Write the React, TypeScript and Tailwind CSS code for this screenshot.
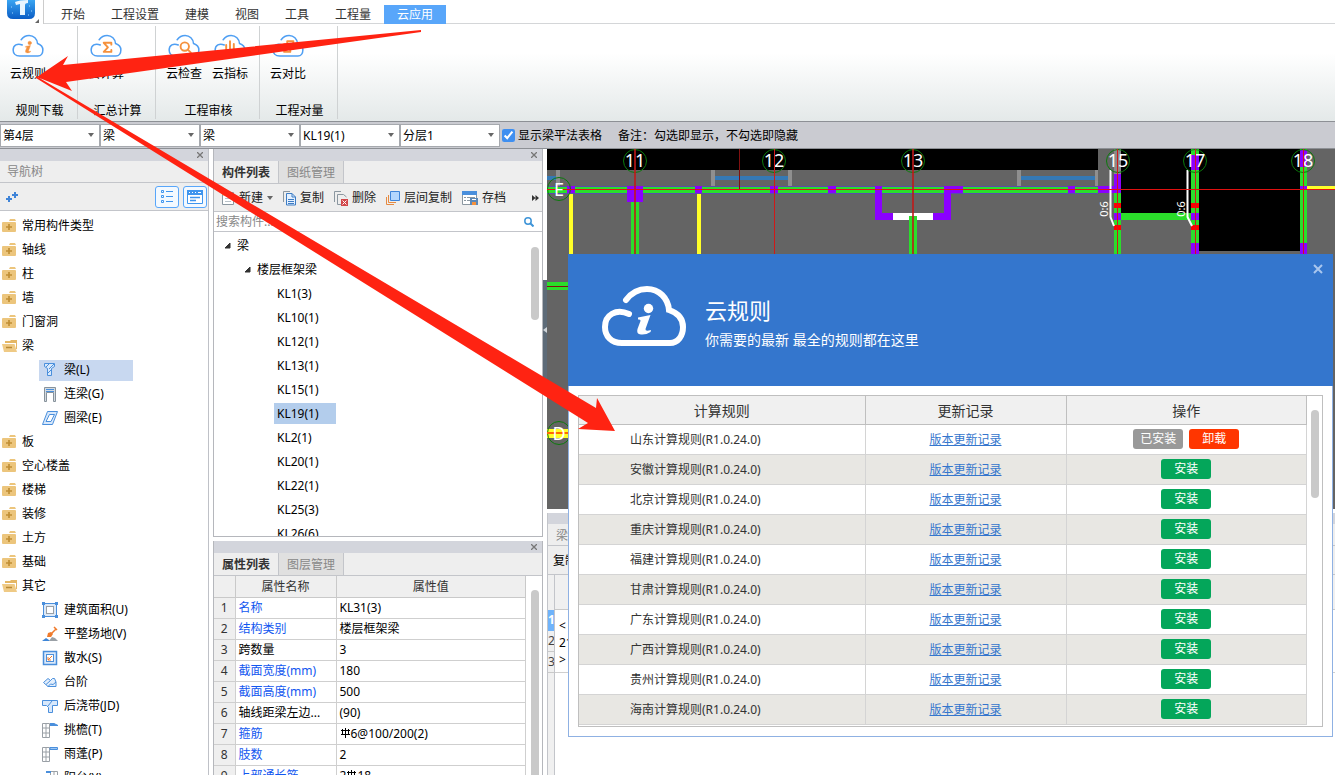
import React from 'react';

const ribbonTabs = ['开始', '工程设置', '建模', '视图', '工具', '工程量', '云应用'];

const ribbonGroups = [
  { title: '规则下载', wide: false, items: [{ label: '云规则', icon: 'info' }] },
  { title: '汇总计算', wide: false, items: [{ label: '云计算', icon: 'sum' }] },
  {
    title: '工程审核',
    wide: true,
    items: [
      { label: '云检查', icon: 'search' },
      { label: '云指标', icon: 'chart' },
    ],
  },
  { title: '工程对量', wide: false, items: [{ label: '云对比', icon: 'compare' }] },
];

const filters = [
  { name: '楼层', value: '第4层' },
  { name: '构件大类', value: '梁' },
  { name: '构件类型', value: '梁' },
  { name: '构件', value: 'KL19(1)' },
  { name: '分层', value: '分层1' },
];

const navTree = [
  { label: '常用构件类型' },
  { label: '轴线' },
  { label: '柱' },
  { label: '墙' },
  { label: '门窗洞' },
  {
    label: '梁',
    children: [
      { label: '梁(L)', icon: 'beam', selected: true },
      { label: '连梁(G)', icon: 'link' },
      { label: '圈梁(E)', icon: 'ring' },
    ],
  },
  { label: '板' },
  { label: '空心楼盖' },
  { label: '楼梯' },
  { label: '装修' },
  { label: '土方' },
  { label: '基础' },
  {
    label: '其它',
    children: [
      { label: '建筑面积(U)', icon: 'area' },
      { label: '平整场地(V)', icon: 'site' },
      { label: '散水(S)', icon: 'apron' },
      { label: '台阶', icon: 'step' },
      { label: '后浇带(JD)', icon: 'strip' },
      { label: '挑檐(T)', icon: 'eave' },
      { label: '雨蓬(P)', icon: 'canopy' },
      { label: '阳台(Y)', icon: 'balcony' },
    ],
  },
] as { label: string; children?: { label: string; icon: string; selected?: boolean }[] }[];

const members = ['KL1(3)', 'KL10(1)', 'KL12(1)', 'KL13(1)', 'KL15(1)', 'KL19(1)', 'KL2(1)', 'KL20(1)', 'KL22(1)', 'KL25(3)', 'KL26(6)'];

const properties = [
  { name: '名称', value: 'KL31(3)', blue: true },
  { name: '结构类别', value: '楼层框架梁', blue: true },
  { name: '跨数量', value: '3' },
  { name: '截面宽度(mm)', value: '180', blue: true },
  { name: '截面高度(mm)', value: '500', blue: true },
  { name: '轴线距梁左边...', value: '(90)' },
  { name: '箍筋', before: '', rebar: true, value: '6@100/200(2)', blue: true },
  { name: '肢数', value: '2', blue: true },
  { name: '上部通长筋', before: '2', rebar: true, value: '18', blue: true },
];

const rules = ['山东', '安徽', '北京', '重庆', '福建', '甘肃', '广东', '广西', '贵州', '海南'];

const CLOUD = 'M24 14C30 6 37 3 45 3C57 3 66 12 67 24C76 27 81 33 81 41C81 50 76 57 68 57L20 57C9 57 3 50 3 41C3 29 14 22 27 28';

const InfoMark = () => (
  <>
    <circle cx="46.500" cy="22.500" r="4.700" />
    <path d="M36 31.500L48.500 29L43.500 43Q43 46 49 44L48.500 46Q44 49 39 48.500Q34 48 35.500 43L38.500 35Q39 33 36 33.500Z" />
  </>
);

const CloudIcon = ({ icon }: { icon: string }) => (
  <svg viewBox="0 0 84 61" className="h-6 w-8" fill="none" stroke="#4f9ff3" strokeWidth="4" strokeLinecap="round" strokeLinejoin="round">
    <path d={CLOUD} />
    {icon === 'info' && (
      <g fill="#f5913d" stroke="#f5913d" strokeWidth="1">
        <InfoMark />
      </g>
    )}
    {icon === 'sum' && <path d="M56 27V22H36L47 34L36 46H56V41" stroke="#f5913d" strokeWidth="5" />}
    {icon === 'search' && (
      <g stroke="#f5913d" strokeWidth="5">
        <circle cx="44" cy="32" r="11" />
        <path d="M52 40L60 48" />
      </g>
    )}
    {icon === 'chart' && <path d="M32 28V44M42 18V44M52 25V44M28 44H58" stroke="#f5913d" strokeWidth="5" />}
    {icon === 'compare' && <path d="M40 24V18H56V38H50M32 26H48V46H32Z" stroke="#f5913d" strokeWidth="5" />}
  </svg>
);

const FolderIcon = ({ open }: { open?: boolean }) => (
  <svg viewBox="0 0 16 14" className="h-3.5 w-4 shrink-0">
    {open ? (
      <>
        <path d="M3 4V2H8L9 1H15V10H14V4Z" fill="#e5b765" />
        <path d="M0 5H12.500L15 13H2Z" fill="#efca85" />
        <path d="M4 8.500H10" stroke="#b98a35" strokeWidth="1.500" />
      </>
    ) : (
      <>
        <path d="M7 2L8 0H13L14 2Z" fill="#ecc57c" />
        <rect x="0" y="3" width="14" height="10" rx="1" fill="#ecc57c" />
        <path d="M4 8H10M7 5V11" stroke="#c08f35" strokeWidth="1.700" />
      </>
    )}
  </svg>
);

const MemberIcon = ({ icon }: { icon: string }) => (
  <svg viewBox="0 0 16 16" className="size-4 shrink-0" fill="none" stroke="#4a8fdc" strokeWidth="1">
    {icon === 'beam' && <path d="M2.500 1.500H12.500V4.500L9.500 6.500V13.500H5.500V6.500L2.500 4.500ZM4 5L7 2M7 7L12 2M6 11L9 8" fill="#d8e8fb" />}
    {icon === 'link' && (
      <>
        <path d="M2.500 15.500V1.500H13.500V15.500H11.500V6.500H4.500V15.500Z" fill="#d5dbe0" stroke="#87929b" />
        <path d="M4 3.500H12M4 5.500H12" />
      </>
    )}
    {icon === 'ring' && <path d="M5.500 1.500H15.500L10.500 14.500H.5ZM7.500 4.500H12.500L9 11.500H4Z" fill="#d8e8fb" fillRule="evenodd" />}
    {icon === 'area' && (
      <>
        <rect x="1.500" y="1.500" width="13" height="13" fill="#dce9f8" />
        <rect x="4.500" y="4.500" width="7" height="7" fill="#fff" stroke="#9aa0a6" />
        <path d="M0 1.500H3M13 1.500H16M0 14.500H3M13 14.500H16" strokeWidth="3" />
      </>
    )}
    {icon === 'site' && (
      <>
        <path d="M0 15L4 12L7 14L8 15Z" fill="#3d86d8" stroke="none" />
        <path d="M7 15L10 11L13 12L16 15Z" fill="#9aa0a6" stroke="none" />
        <path d="M5 11L6 7L9 6L11 8L9 11Z" fill="#f07b2c" stroke="none" />
        <path d="M9 8L14 3M12 1L15 4" stroke="#f07b2c" strokeWidth="1.500" />
      </>
    )}
    {icon === 'apron' && (
      <>
        <rect x="1.500" y="1.500" width="13" height="13" fill="#dce9f8" strokeWidth="1.500" />
        <rect x="4.500" y="4.500" width="7" height="7" fill="#fff" />
        <path d="M10 6L6 10M6 7V10H9" stroke="#f07b2c" />
      </>
    )}
    {icon === 'step' && <path d="M1.500 8.500L6 4.500L8.500 6.500L10.500 4.500H12.500L14 8V12.500H6ZM4 10.500L8.500 6.500M6 12.500L8.500 10L11 10.500L14 8" fill="#e4effc" />}
    {icon === 'strip' && <path d="M.5 2.500H15.500V7.500H10.500V14.500H6.500V9.500L4.500 7.500H.5ZM10 3L6 8" fill="#d8e8fb" />}
    {(icon === 'eave' || icon === 'canopy' || icon === 'balcony') && (
      <path d="M.5 1.500H7.500V15.500H.5ZM4 1.500V6M.5 6H7.500M4 6V15M.5 11H7.500" stroke="#9aa0a6" transform={icon === 'balcony' ? 'translate(8 0)' : undefined} />
    )}
    {icon === 'eave' && <path d="M8 1.500H12L16 3.500H8" fill="#4a8fdc" />}
    {icon === 'canopy' && <path d="M8 1.500H15.500V3.500H8Z" fill="#9cc6f5" />}
    {icon === 'balcony' && <path d="M4 2H9" strokeWidth="2" />}
  </svg>
);

const Caret = () => (
  <svg viewBox="0 0 6 4" className="pointer-events-none h-1 w-1.5 shrink-0" fill="#666">
    <path d="M0 0H6L3 4Z" />
  </svg>
);

const Rebar = () => (
  <svg viewBox="0 0 11 10" className="mb-1 inline h-2.5 w-[11px]" fill="none" stroke="#000" strokeWidth="1" shapeRendering="crispEdges">
    <path d="M5.500 0V10M2.500 1V7M8.500 1V7M1 2.500H10M1 6.500H10" />
  </svg>
);

const PanelBar = ({ name }: { name: string }) => (
  <div className="flex h-3 shrink-0 items-center justify-end bg-[#d3d5dc] pr-[3px]">
    <button aria-label={name} className="flex size-2.5 items-center justify-center">
      <svg viewBox="0 0 6 6" className="size-1.5" stroke="#777" strokeWidth="1.300">
        <path d="M0 0L6 6M6 0L0 6" />
      </svg>
    </button>
  </div>
);

const PanelTabs = ({ tabs }: { tabs: string[] }) => (
  <div className="flex h-[23px] shrink-0 border-b border-[#c3c5ca] bg-[#eee]">
    <button className="border-r border-[#c3c5ca] px-2 pt-0.5 font-bold text-[#333]">{tabs[0]}</button>
    <button className="border-r border-[#c3c5ca] bg-[#e0e0e0] px-2 pt-0.5 text-[#888]">{tabs[1]}</button>
  </div>
);

const Ribbon = () => (
  <header className="shrink-0">
    <div className="flex h-6 items-start">
      <div className="relative h-6 w-11 shrink-0 border-r border-[#ccc]">
        <svg viewBox="0 0 36 24" className="ml-1 h-6 w-9">
          <defs>
            <linearGradient id="logo" x1="0" y1="0" x2="0" y2="1">
              <stop offset="0" stopColor="#3aa5f2" />
              <stop offset="1" stopColor="#0a5cc4" />
            </linearGradient>
          </defs>
          <path d="M3 0H31V13Q31 19 25 19H9Q3 19 3 13Z" fill="url(#logo)" />
          <path d="M11 2Q15 0 24 0V3Q21 3 21 5V15H16V4L12 5Z" fill="#e9f6ff" />
          <path d="M7 7H8M25 6H26M27 11H28M8 13H9M24 15H25" stroke="#9fd6ff" />
          <path d="M35 19V23H31Z" fill="#666" />
        </svg>
      </div>
      <nav className="flex h-6 flex-1 items-end border-b border-[#d4d6d8] pl-1 text-[#333]">
        {ribbonTabs.map((tab) => (
          <button key={tab} className={tab === '云应用' ? '-mb-px h-[19px] bg-[#58a6fa] px-[13px] text-white' : '-mb-px h-[19px] px-[13px]'}>
            {tab}
          </button>
        ))}
      </nav>
    </div>
    <div className="flex h-[97px] bg-linear-to-b from-white from-30% to-[#e4e9e9] py-0.5">
      {ribbonGroups.map((group) => (
        <section key={group.title} className={`flex flex-col justify-between border-r border-[#cfd2d3] pt-2 ${group.wide ? 'w-[104px]' : 'w-[78px]'}`}>
          <div className="flex gap-2.5 pl-2.5">
            {group.items.map((item) => (
              <button key={item.label} className="flex flex-col items-center gap-2 leading-4">
                <CloudIcon icon={item.icon} />
                {item.label}
              </button>
            ))}
          </div>
          <h2 className="pl-0.5 text-center leading-4">{group.title}</h2>
        </section>
      ))}
    </div>
  </header>
);

const FilterBar = () => (
  <div className="flex h-7 shrink-0 items-center border-y border-[#8d9095] bg-[#cacbd1]">
    {filters.map((f) => (
      <div key={f.name} className="relative flex w-[100px] items-center">
        <select aria-label={f.name} className="h-[23px] w-full appearance-none border border-[#a6a9ae] bg-white pt-0.5 pl-0.5">
          <option>{f.value}</option>
        </select>
        <span className="pointer-events-none absolute right-1.5">
          <Caret />
        </span>
      </div>
    ))}
    <label className="ml-0.5 flex items-center gap-[3px] pt-px">
      <input type="checkbox" defaultChecked className="size-[13px] accent-[#3f8ff0]" />
      显示梁平法表格
    </label>
    <span className="ml-4 pt-px">备注：勾选即显示，不勾选即隐藏</span>
  </div>
);

const NavPanel = () => (
  <aside className="flex w-[209px] shrink-0 flex-col border-r border-[#bfc1c7]">
    <PanelBar name="关闭导航树" />
    <h2 className="h-[22px] shrink-0 border-b border-[#c3c5ca] bg-[#eee] pl-[7px] leading-[22px] text-[#888]">导航树</h2>
    <div className="flex h-7 shrink-0 items-center border-b border-[#c3c5ca] bg-[#eee] pr-px">
      <svg viewBox="0 0 12 12" className="ml-1.5 size-3" stroke="#3f84d8" strokeWidth="2">
        <path d="M0 8H6M3 5V11M6 4H12M9 1V7" />
      </svg>
      <button aria-label="列表视图" className="ml-auto flex h-[22px] w-6 items-center justify-center rounded-[3px] border border-[#58a6fa] bg-[#f3f9ff]">
        <svg viewBox="0 0 12 13" className="h-[13px] w-3" fill="none" stroke="#3f95ee">
          <path d="M.5 .5H2.500V2.500H.5ZM.5 5.500H2.500V7.500H.5ZM.5 10.500H2.500V12.500H.5ZM5 1.500H12M5 6.500H12M5 11.500H12" />
        </svg>
      </button>
      <button aria-label="图标视图" className="ml-1 flex h-[22px] w-6 items-center justify-center rounded-[3px] border border-[#58a6fa] bg-[#f3f9ff]">
        <svg viewBox="0 0 16 14" className="h-3.5 w-4" fill="none" stroke="#3f95ee">
          <path d="M.5 .5H15.500V13.500H.5Z" fill="#fff" />
          <path d="M0 2.500H16" strokeWidth="5" />
          <path d="M2 2.500H3M5 2.500H6M8 2.500H9M11 2.500H14" stroke="#fff" />
          <path d="M3 7.500H13M3 10.500H9" strokeWidth="1.500" />
        </svg>
      </button>
    </div>
    <ul className="min-h-0 flex-1 overflow-hidden pt-[3px]">
      {navTree.map((node) => (
        <li key={node.label}>
          <div className="flex h-6 items-center gap-1 pl-0.5">
            <FolderIcon open={!!node.children} />
            {node.label}
          </div>
          {node.children && (
            <ul className="pl-[39px]">
              {node.children.map((child) => (
                <li key={child.label} className="flex h-6 items-center">
                  <span className={`flex h-[21px] items-center gap-1.5 pl-[3px] ${child.selected ? 'w-[94px] bg-[#c8d8f0]' : ''}`}>
                    <MemberIcon icon={child.icon} />
                    {child.label}
                  </span>
                </li>
              ))}
            </ul>
          )}
        </li>
      ))}
    </ul>
  </aside>
);

const Expander = () => (
  <svg viewBox="0 0 7 7" className="size-[7px] shrink-0" fill="#333">
    <path d="M6 1V6H1Z" stroke="#333" />
  </svg>
);

const MemberPanel = () => (
  <section className="relative flex min-h-0 flex-[388_1_0%] flex-col border border-t-0 border-[#b5b7bc]">
    <PanelBar name="关闭构件列表" />
    <PanelTabs tabs={['构件列表', '图纸管理']} />
    <div className="flex h-7 shrink-0 items-center gap-2.5 border-b border-[#c3c5ca] bg-[#eee] pt-px pl-[7px] text-[#222]">
      <button className="flex items-center gap-1">
        <svg viewBox="0 0 14 16" className="h-4 w-3.5" fill="none" stroke="#8b97a0">
          <path d="M1.500 5V14.500H12.500V2.500H6" fill="#fff" />
          <path d="M4 8.500H10M4 11.500H10" stroke="#b9c2c9" />
          <path d="M3 0V6M0 3H6M1 1L5 5M5 1L1 5" stroke="#f2a33c" />
        </svg>
        新建
        <Caret />
      </button>
      <button className="flex items-center gap-1">
        <svg viewBox="0 0 13 16" className="h-4 w-[13px]" fill="none" stroke="#3d7cc4">
          <path d="M.5 12V1.500H7" stroke="#8b97a0" />
          <path d="M3.500 3.500H9L12.500 7V15H3.500Z" fill="#e5f1ff" />
          <path d="M9 3.500V7H12.500M5 9.500H11M5 11.500H11M5 13.500H11" />
        </svg>
        复制
      </button>
      <button className="flex items-center gap-1">
        <svg viewBox="0 0 14 16" className="h-4 w-3.5" fill="none" stroke="#8b97a0">
          <path d="M.5 12V1.500H7M7 14.500H3.500V4.500H9.500L12.500 7" />
          <path d="M7 9H14V16H7Z" fill="#d2474a" stroke="none" />
          <path d="M8.500 10.500L12.500 14.500M12.500 10.500L8.500 14.500" stroke="#fff" />
        </svg>
        删除
      </button>
      <button className="flex items-center gap-1">
        <svg viewBox="0 0 14 16" className="h-4 w-3.5" fill="none" stroke="#e58a42">
          <path d="M.5 7V14.500H8M2.500 5V12.500H10" />
          <path d="M4.500 1.500H13.500V10.500H4.500Z" fill="#b3d6fd" stroke="#3f84d8" />
        </svg>
        层间复制
      </button>
      <button className="flex items-center gap-1">
        <svg viewBox="0 0 16 16" className="size-4" fill="none" stroke="#8b97a0">
          <path d="M.5 1.500H14.500V14.500H.5Z" fill="#fff" />
          <path d="M0 3H15" stroke="#4a8fdc" strokeWidth="4" />
          <path d="M2 7.500H4M2 10.500H4M5 7.500H13M5 10.500H8" />
          <path d="M8 8H16V15H8Z" fill="#5b88b8" stroke="none" />
          <path d="M10 13.500H14" stroke="#f5913d" strokeWidth="3" />
          <path d="M10 9.500H14" stroke="#fff" />
        </svg>
        存档
      </button>
      <svg viewBox="0 0 7 6" className="mr-[3px] ml-auto h-1.5 w-[7px]" fill="#333">
        <path d="M0 0L3.500 3L0 6ZM3.500 0L7 3L3.500 6Z" />
      </svg>
    </div>
    <div className="flex h-5 shrink-0 items-center border-b border-[#c3c5ca] pr-2">
      <input aria-label="搜索构件" placeholder="搜索构件..." className="min-w-0 flex-1 pl-0.5 outline-none placeholder:text-[#888]" />
      <svg viewBox="0 0 10 10" className="size-2.5" fill="none" stroke="#3f95d8" strokeWidth="1.500">
        <circle cx="4" cy="4" r="3.200" />
        <path d="M6.500 6.500L9.500 9.500" strokeWidth="2" />
      </svg>
    </div>
    <div className="min-h-0 flex-1 overflow-hidden pt-px">
      <div className="flex h-6 items-center gap-1.5 pt-px pl-2.5">
        <Expander />
        梁
      </div>
      <div className="flex h-6 items-center gap-1.5 pt-px pl-[30px]">
        <Expander />
        楼层框架梁
      </div>
      <ul className="pl-[60px]">
        {members.map((m) => (
          <li key={m} className="flex h-6 items-center">
            <span className={`h-[21px] pl-[3px] leading-[21px] ${m === 'KL19(1)' ? 'w-[62px] bg-[#b3cdec]' : ''}`}>{m}</span>
          </li>
        ))}
      </ul>
    </div>
    <div className="absolute top-[98px] right-[3px] h-[73px] w-2 rounded-full bg-[#c9c9c9]" />
  </section>
);

const PropertyPanel = () => (
  <section className="relative flex min-h-0 flex-[234_1_0%] flex-col overflow-hidden border-x border-[#b5b7bc]">
    <PanelBar name="关闭属性列表" />
    <PanelTabs tabs={['属性列表', '图层管理']} />
    <table className="w-[312px] table-fixed border-collapse">
      <thead>
        <tr className="h-[21px] bg-[#efefef] text-[#333]">
          <th className="w-[21px] border-r border-b border-[#c9c9c9]" />
          <th className="w-[101px] border-r border-b border-[#c9c9c9] font-normal">属性名称</th>
          <th className="border-r border-b border-[#c9c9c9] font-normal">属性值</th>
        </tr>
      </thead>
      <tbody>
        {properties.map((p, i) => (
          <tr key={p.name} className="h-[21px]">
            <td className="border-r border-b border-[#cfcfcf] bg-[#efefef] text-center text-[#333]">{i + 1}</td>
            <td className={`border-r border-b border-[#cfcfcf] pl-[3px] whitespace-nowrap ${p.blue ? 'text-[#1257f0]' : ''}`}>{p.name}</td>
            <td className="border-r border-b border-[#cfcfcf] pl-[3px] whitespace-nowrap">
              {p.before}
              {p.rebar && <Rebar />}
              {p.value}
            </td>
          </tr>
        ))}
      </tbody>
    </table>
    <div className="absolute top-[49px] right-[3px] -bottom-1 w-2 rounded-full bg-[#c9c9c9]" />
  </section>
);

const axes = [
  { name: '11', x: 88 },
  { name: '12', x: 227 },
  { name: '13', x: 366 },
  { name: '15', x: 571 },
  { name: '17', x: 648 },
  { name: '18', x: 756 },
];

const Drawing = () => (
  <svg className="block size-full bg-[#646464]" shapeRendering="crispEdges">
    {/* open areas */}
    <path d="M0 0H551V21H0ZM574 0H645V64H574ZM652 0H753V102H652Z" fill="#000" />
    <path d="M567 0H574V26H567Z" fill="#8a8a8a" />
    {/* windows */}
    <path d="M0 27H9V31H0ZM168 27H241V31H168ZM474 27H548V31H474Z" fill="#3579b5" />
    <path d="M9 21H13V37H9ZM164 21H168V37H164ZM241 21H245V37H241ZM470 21H474V37H470ZM548 21H551V37H548Z" fill="#8f8f8f" />
    {/* beams */}
    <path d="M0 37H551V45H0Z" fill="#5a4bb0" />
    <path d="M0 38H551V44H0Z" fill="#2bdd2b" />
    <path d="M84 53H92V360H84ZM362 67H370V360H362ZM567 44H574V360H567ZM644 0H652V360H644ZM753 0H760V360H753ZM574 64H644V71H574ZM0 133H21V141H0Z" fill="#2bdd2b" />
    <path d="M22 45H26V360H22ZM150 45H154V360H150ZM760 37H1400V40H760ZM0 280H22V289H0Z" fill="#ffff28" />
    {/* columns */}
    <path
      d="M20 37H28V44H20ZM80 37H96V53H80ZM148 37H155V44H148ZM223 37H231V44H223ZM281 37H289V44H281ZM328 37H335V64H346V71H328ZM397 37H416V44H404V71H386V64H397ZM521 37H528V44H521ZM551 37H567V25H574V44H551ZM567 64H574V71H567ZM644 6H652V21H644ZM644 64H652V71H644ZM644 94H652V110H644ZM753 1H760V18H753ZM753 37H760V41H753ZM753 94H760V110H753Z"
      fill="#8b00ff"
    />
    <path d="M346 64H386V71H346Z" fill="#fff" />
    <path d="M362 67H370V71H362Z" fill="#2bdd2b" />
    <path d="M567 54H574V59H567ZM567 76H574V81H567ZM644 54H652V59H644ZM644 76H652V81H644Z" fill="#f00" />
    <path d="M563.500 21V68L567 77M640.500 21V68L645 77" fill="none" stroke="#fff" strokeWidth="2" shapeRendering="auto" />
    <g fill="none" stroke="#0b7a0b" shapeRendering="auto">
      {axes.map((a) => (
        <circle key={a.name} cx={a.x} cy="12" r="11.500" />
      ))}
      <circle cx="12" cy="40" r="11.500" />
      <circle cx="12" cy="284" r="11.500" />
    </g>
    <g fill="#fff" fontSize="18" textAnchor="middle">
      {axes.map((a) => (
        <text key={a.name} x={a.x} y="18">
          {a.name}
        </text>
      ))}
    </g>
    {/* grid axes */}
    <path d="M0 40H1400V41H0Z" fill="#e01010" />
    <path d="M570 0H571V360H570ZM648 0H649V360H648ZM756 0H757V360H756ZM227 0H228V360H227Z" fill="#d01818" />
    <path d="M87 0H89V360H87ZM365 0H367V360H365Z" fill="#c01818" fillOpacity="0.800" />
    <path d="M192 0H193V40H192ZM0 137H21V138H0Z" fill="#801010" />
    <path d="M0 283H22V285H0Z" fill="#ff6a00" />
    <g fill="#fff" fontSize="18" textAnchor="middle">
      <text x="12" y="47">
        E
      </text>
      <text x="12" y="291">
        D
      </text>
    </g>
    <g fill="#fff" fontSize="11" textAnchor="middle">
      <text transform="translate(561 60) rotate(-90)">0:6</text>
      <text transform="translate(638 60) rotate(-90)">0:6</text>
    </g>
  </svg>
);

const BeamTable = () => (
  <section className="flex min-h-0 flex-[262_1_0%] flex-col overflow-hidden border-l border-[#c3c5ca]">
    <div className="h-[11px] shrink-0 bg-[#d3d5dc]" />
    <h2 className="h-[22px] shrink-0 border-b border-[#c3c5ca] bg-[#eee] pl-2 leading-6 text-[#888]">梁平法表格</h2>
    <div className="flex h-[29px] shrink-0 items-center border-b border-[#c3c5ca] bg-[#eee] pt-0.5 pl-[5px]">
      <button>复制</button>
    </div>
    <div className="flex flex-1">
      <div className="w-[7px] shrink-0 overflow-hidden border-r border-[#c3c5ca] bg-[#f0f0f0] pt-[35px] leading-5 text-[#444]">
        <div className="h-[21px] bg-[#6fb3fb] font-bold text-white">1</div>
        <div className="h-[21px] border-b border-[#c9c9c9]">2</div>
        <div className="h-[21px] border-b border-[#c9c9c9]">3</div>
      </div>
      <div className="flex-1">
        <div className="h-[35px] border-b border-[#c9c9c9] bg-[#f0f0f0]" />
        <p className="h-[63px] border-b border-[#cfcfcf] pt-[7px] pl-1 leading-[17px]">
          &lt;
          <br />
          21
          <br />
          &gt;
        </p>
      </div>
    </div>
  </section>
);

const RulesDialog = () => (
  <div role="dialog" aria-label="云规则" className="absolute top-[105px] right-0.5 left-[21px] border border-t-0 border-[#8fb1e3] bg-white">
    <div className="relative -mx-px flex h-[132px] items-center bg-[#3476cd] pl-[34px] text-white">
      <svg viewBox="0 0 84 61" className="-mt-2 h-[61px] w-[84px]" fill="none" stroke="#fff" strokeWidth="6" strokeLinecap="round">
        <path d={CLOUD} />
        <g fill="#fff" stroke="none">
          <InfoMark />
        </g>
      </svg>
      <div className="ml-[19px] pt-[7px]">
        <h1 className="text-[22px] leading-8">云规则</h1>
        <p className="text-sm leading-7">你需要的最新 最全的规则都在这里</p>
      </div>
      <button aria-label="关闭" className="absolute top-[9px] right-[9px] p-px">
        <svg viewBox="0 0 10 10" className="size-2.5" stroke="#a9c6ee" strokeWidth="2">
          <path d="M1 1L9 9M9 1L1 9" />
        </svg>
      </button>
    </div>
    <div className="relative m-[9px] border border-[#bfbfbf] pr-[15px] pb-px">
      <table className="w-full table-fixed border-collapse text-[#333]">
        <thead>
          <tr className="h-7 border-b border-[#bfbfbf] bg-[#f0f0f0] text-sm">
            <th className="w-[286px] border-r border-[#bfbfbf] pt-0.5 font-normal">计算规则</th>
            <th className="w-[201px] border-r border-[#bfbfbf] pt-0.5 font-normal">更新记录</th>
            <th className="border-r border-[#bfbfbf] pt-0.5 font-normal">操作</th>
          </tr>
        </thead>
        <tbody>
          {rules.map((rule, i) => (
            <tr key={rule} className="h-[30px] border-b border-[#d4d4d4] even:bg-[#e8e7e3]">
              <td className="border-r border-[#d4d4d4] pt-px pl-[51px]">{rule}计算规则(R1.0.24.0)</td>
              <td className="border-r border-[#d4d4d4] pt-px text-center">
                <a href="#" className="text-[#3476cd] underline">
                  版本更新记录
                </a>
              </td>
              <td className="border-r border-[#d4d4d4]">
                <div className="flex justify-center gap-1.5 text-white">
                  {i === 0 ? (
                    <>
                      <button className="h-5 w-[50px] rounded-[3px] bg-[#999]">已安装</button>
                      <button className="h-5 w-[50px] rounded-[3px] bg-[#ff3600]">卸载</button>
                    </>
                  ) : (
                    <button className="h-5 w-[50px] rounded-[3px] bg-[#04a65a]">安装</button>
                  )}
                </div>
              </td>
            </tr>
          ))}
        </tbody>
      </table>
      <div className="absolute top-3.5 right-[3px] h-[88px] w-2 rounded-full bg-[#c9c9c9]" />
    </div>
  </div>
);

export default function App() {
  return (
    <div className="relative flex h-screen flex-col overflow-hidden bg-white font-['Noto_Sans','Noto_Sans_CJK_SC',sans-serif] text-xs text-black">
      <Ribbon />
      <FilterBar />
      <main className="flex min-h-0 flex-1">
        <NavPanel />
        <div className="ml-1 flex w-[330px] shrink-0 flex-col gap-1">
          <MemberPanel />
          <PropertyPanel />
        </div>
        <div className="flex w-1 shrink-0 flex-col pt-[131px]">
          <button aria-label="收起" className="flex h-[100px] items-center bg-[#5d6b78]">
            <svg viewBox="0 0 4 6" className="h-1.5 w-1" fill="#cfd5da">
              <path d="M4 0V6L0 3Z" />
            </svg>
          </button>
        </div>
        <div className="relative flex min-w-0 flex-1 flex-col gap-1">
          <div className="min-h-0 flex-[360_1_0%] overflow-hidden">
            <Drawing />
          </div>
          <BeamTable />
          <RulesDialog />
        </div>
      </main>
      {/* guide arrows over the window */}
      <svg className="pointer-events-none absolute inset-0 size-full" fill="#ff2312">
        <path d="M421 30L63 65L68 56L37 77L72 91L66 82L421 32Z" />
        <path d="M36 76L596 408L597 398L615 431L578 429L588 423L36 78Z" />
      </svg>
    </div>
  );
}
